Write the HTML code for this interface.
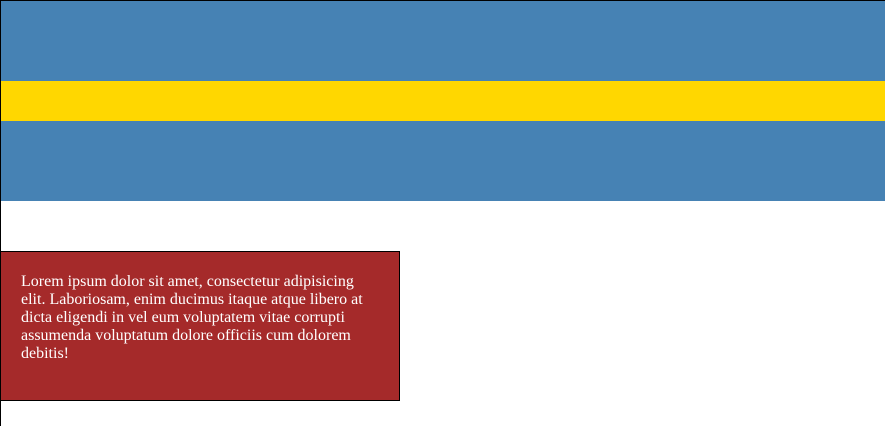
<!DOCTYPE html>
<html><head><style>
html,body{margin:0;padding:0;width:885px;height:426px;overflow:hidden;background:#fff}
.frame{position:absolute;left:0;top:0;width:884px;height:425px;border-left:1px solid #000;border-top:1px solid #000}
.blue{position:absolute;left:1px;top:1px;width:884px;height:200px;background:#4682b4}
.yellow{position:absolute;left:1px;top:81px;width:884px;height:40px;background:#ffd700}
.red{position:absolute;left:0;top:251px;width:358px;height:107px;border:1px solid #000;background:#a52a2a;padding:21px 20px 20px 20px;color:#fff;font:16px/18px "Liberation Serif",serif}
</style></head><body>
<div class="frame"></div>
<div class="blue"></div>
<div class="yellow"></div>
<div class="red">Lorem ipsum dolor sit amet, consectetur adipisicing elit. Laboriosam, enim ducimus itaque atque libero at dicta eligendi in vel eum voluptatem vitae corrupti assumenda voluptatum dolore officiis cum dolorem debitis!</div>
</body></html>
